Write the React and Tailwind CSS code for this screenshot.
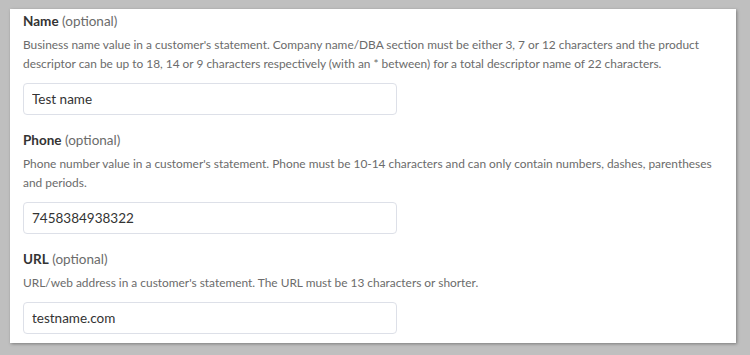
import React from 'react'

const fields = [
  {
    label: 'Name',
    desc: "Business name value in a customer's statement. Company name/DBA section must be either 3, 7 or 12 characters and the product descriptor can be up to 18, 14 or 9 characters respectively (with an * between) for a total descriptor name of 22 characters.",
    value: 'Test name',
  },
  {
    label: 'Phone',
    desc: "Phone number value in a customer's statement. Phone must be 10-14 characters and can only contain numbers, dashes, parentheses and periods.",
    value: '7458384938322',
  },
  {
    label: 'URL',
    desc: "URL/web address in a customer's statement. The URL must be 13 characters or shorter.",
    value: 'testname.com',
  },
]

function Field({ label, desc, value }) {
  return (
    <div className="flex flex-col">
      <div className="text-[13.5px] leading-[20px] text-[#333]">
        <span className="font-bold">{label}</span>{' '}
        <span className="text-[#6b6b6b]">(optional)</span>
      </div>
      <p className="mt-[4px] text-[11.9px] leading-[19px] text-[#6b6b6b]">{desc}</p>
      <input
        readOnly
        value={value}
        className="mt-[10px] w-[374px] h-[32px] rounded-[4px] border border-[#dde0e8] bg-white px-[8px] text-[13.5px] text-[#333] outline-none"
        style={{ fontFamily: 'inherit' }}
      />
    </div>
  )
}

export default function App() {
  return (
    <div
      className="w-[750px] h-[355px] bg-[#bfbfbf] pl-[10px] pt-[9px]"
      style={{ fontFamily: "Lato, 'Noto Sans', sans-serif" }}
    >
      <div className="w-[726px] h-[334px] bg-white shadow-[1px_1px_3px_rgba(0,0,0,0.35)] px-[13px] pt-[2px] flex flex-col gap-[15px]">
        {fields.map(f => (
          <Field key={f.label} {...f} />
        ))}
      </div>
    </div>
  )
}
